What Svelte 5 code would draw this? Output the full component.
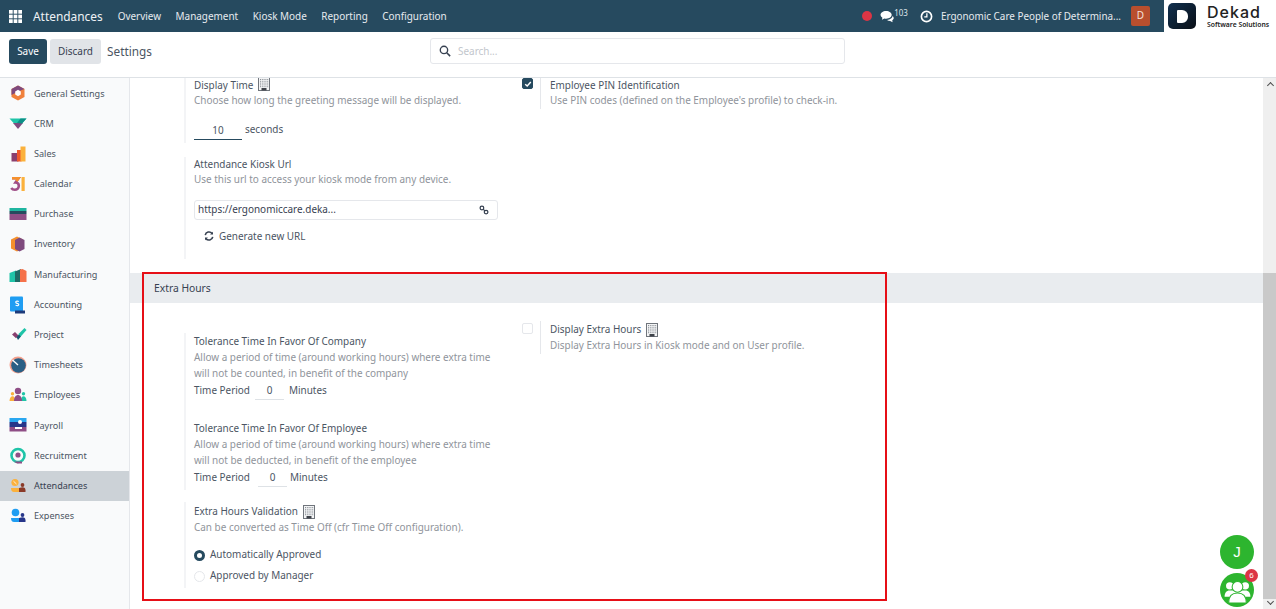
<script>
  const apps = [
    ['General Settings', 'gen'], ['CRM', 'crm'], ['Sales', 'sales'], ['Calendar', 'cal'], ['Purchase', 'pur'],
    ['Inventory', 'inv'], ['Manufacturing', 'man'], ['Accounting', 'acc'], ['Project', 'pro'], ['Timesheets', 'tim'],
    ['Employees', 'emp'], ['Payroll', 'pay'], ['Recruitment', 'rec'], ['Attendances', 'att'], ['Expenses', 'exp']
  ];
  const menu = ['Overview', 'Management', 'Kiosk Mode', 'Reporting', 'Configuration'];
</script>

{#snippet building()}
  <svg class="bld" viewBox="0 0 12 14" width="12" height="14" aria-hidden="true">
    <rect x="0.5" y="0.5" width="11" height="13" fill="#f4f5f6" stroke="#70757c" stroke-width="1"/>
    {#each [2, 3.8, 5.6, 7.4, 9.2] as y}
      {#each [2, 3.8, 5.6, 7.4, 9.2] as x}
        <rect x={x} y={y} width="1" height="1" fill="#8b9097"/>
      {/each}
    {/each}
    <rect x="3.5" y="11" width="5" height="2.500" fill="#3f434a"/>
  </svg>
{/snippet}

{#snippet appIcon(k)}
  <svg viewBox="0 0 18 18" width="18" height="18" aria-hidden="true">
    {#if k === 'gen'}
      <path d="M9 1.500 15.500 5v8L9 16.500 2.500 13V5z" fill="#f0803c"/>
      <path d="M9 1.500 2.500 5v6l6.500-3.500 6.500-2.500z" fill="#7f4a7e"/>
      <path d="M9 5.800 11.800 7.400v3.200L9 12.200 6.200 10.600V7.400z" fill="#fff"/>
    {:else if k === 'crm'}
      <path d="M0.500 3.500h17L13 8.500H5z" fill="#1fc4a8"/>
      <path d="M4 8h10l-5 6z" fill="#7f4a7e"/>
      <path d="M8 8l3.500-4.500h6L13 8.500z" fill="#0d8f87"/>
    {:else if k === 'sales'}
      <rect x="2.500" y="8" width="7" height="8.500" fill="#8a3f6f"/>
      <rect x="8" y="5" width="4.500" height="11.500" fill="#f0592c"/>
      <rect x="11.500" y="1.500" width="5" height="15" fill="#fbb13c"/>
    {:else if k === 'cal'}
      <path d="M3 3.200h6.500L6.500 7.500c2 0 3.300 1.200 3.300 3.300 0 2.400-1.900 4-4 4-1.500 0-2.800-.7-3.600-1.800" fill="none" stroke="#a04f88" stroke-width="2.600"/>
      <path d="M3 3.200h6.500L7.500 6" fill="none" stroke="#f5902d" stroke-width="2.600"/>
      <rect x="12.500" y="2" width="3.200" height="14" fill="#fbb13c"/>
    {:else if k === 'pur'}
      <rect x="0.500" y="3" width="17" height="3" fill="#1fb5a0"/>
      <rect x="0.500" y="6" width="17" height="3" fill="#264a5f"/>
      <rect x="0.500" y="9" width="17" height="6" fill="#8f4e86"/>
    {:else if k === 'inv'}
      <path d="M8 1.500l6 3v9l-6 3-6-3v-9z" fill="#f5902d"/>
      <path d="M10.500 2.500l5 2.500v9l-5 2.500-4.500-2.500V5z" fill="#7f4a7e"/>
    {:else if k === 'man'}
      <path d="M0.500 7 7 4.500V16H0.500z" fill="#1fc4a8"/>
      <path d="M6 5.500 12 3v13H6z" fill="#1d6b65"/>
      <path d="M11 3.500l2.500-.5 4 2v11H11z" fill="#f5714a"/>
    {:else if k === 'acc'}
      <rect x="1" y="0.500" width="13" height="15" rx="1" fill="#1f9df2"/>
      <rect x="6" y="14.500" width="10" height="3" fill="#1d3a7a"/>
      <path d="M9.800 5.500c-2-.9-3.400 0-3 1 .3 1 3 .8 3 2.100 0 1-1.500 1.500-3.200.7" fill="none" stroke="#fff" stroke-width="1.100"/>
    {:else if k === 'pro'}
      <path d="M9.500 8 15.500 2l2 2-7 8z" fill="#1fc4a8"/>
      <path d="M3 8.500 6 6l3.500 3.500-2.500 2.700z" fill="#8a3f6f"/>
      <path d="M7.500 11 10 8.500l1.800 2L9 14z" fill="#14556e"/>
    {:else if k === 'tim'}
      <circle cx="9" cy="9" r="8.500" fill="#f5a08c"/>
      <circle cx="9.500" cy="9.500" r="7.300" fill="#2a5f85"/>
      <path d="M3.500 4 9 9" stroke="#fff" stroke-width="1.300"/>
    {:else if k === 'emp'}
      <circle cx="9" cy="5" r="3.200" fill="#8f4e86"/>
      <circle cx="3.500" cy="7.800" r="1.700" fill="#fbb13c"/>
      <circle cx="14.500" cy="7.800" r="1.700" fill="#1fc4a8"/>
      <path d="M0.500 15c0-3 1.500-4.800 3-4.800S6 11 6 15z" fill="#fbb13c"/>
      <path d="M12 15c0-3 1-4.800 2.500-4.800s3 1.800 3 4.800z" fill="#1fc4a8"/>
      <path d="M5 15c0-4 2-6 4-6s4 2 4 6z" fill="#8f4e86"/>
    {:else if k === 'pay'}
      <rect x="0.500" y="2" width="17" height="4" fill="#2aa7f0"/>
      <rect x="0.500" y="6" width="17" height="5" fill="#27368a"/>
      <rect x="0.500" y="11" width="17" height="4.500" fill="#8f4e86"/>
      <circle cx="11" cy="6" r="2" fill="#fff"/>
      <path d="M6 11h7v2H6z" fill="#fff"/>
    {:else if k === 'rec'}
      <circle cx="9" cy="8.500" r="6.500" fill="none" stroke="#1fc4a8" stroke-width="2.600"/>
      <circle cx="9" cy="8" r="2.600" fill="#8f4e86"/>
      <path d="M5 14.500h8v2H8z" fill="#8f4e86"/>
    {:else if k === 'att'}
      <circle cx="6" cy="5.500" r="3.600" fill="#fbb13c"/>
      <path d="M4.500 4.200 7.500 7" stroke="#fff" stroke-width=".8"/>
      <circle cx="13.500" cy="8" r="1.900" fill="#8a3a28"/>
      <path d="M2 11h9v4H5c-2 0-3-1.500-3-4z" fill="#fbb13c"/>
      <path d="M10 11c0 0 1.500-.8 3.500-.8s3 1 3 3V15H10z" fill="#8a3a28"/>
    {:else}
      <circle cx="6.500" cy="5.500" r="3.800" fill="#1f9df2"/>
      <circle cx="13.500" cy="8" r="1.900" fill="#27368a"/>
      <path d="M2 11h9v4H5c-2 0-3-1.500-3-4z" fill="#1f9df2"/>
      <path d="M10 11c0 0 1.500-.8 3.500-.8s3 1 3 3V15H10z" fill="#27368a"/>
    {/if}
  </svg>
{/snippet}

<div class="page">
  <header class="nav">
    <svg class="grid9" viewBox="0 0 14 14" width="13" height="13" aria-hidden="true">
      {#each [0, 5, 10] as y}
        {#each [0, 5, 10] as x}
          <rect x={x} y={y} width="4" height="4" fill="#fff"/>
        {/each}
      {/each}
    </svg>
    <span class="brand">Attendances</span>
    <nav class="menu">
      {#each menu as m}<span>{m}</span>{/each}
    </nav>
    <div class="systray">
      <span class="dot"></span>
      <svg class="chat" viewBox="0 0 16 14" width="15" height="13" aria-hidden="true">
        <path d="M6.500 1C3 1 .5 2.900.5 5.200c0 1.300.8 2.400 2 3.200L2 10.500l2.700-1.300c.6.100 1.200.2 1.800.2 3.500 0 6-1.900 6-4.200S10 1 6.500 1z" fill="#fff"/>
        <path d="M13.500 6c0 2.600-2.700 4.600-6 4.700.8.700 2 1.100 3.300 1.100l2.700 1.400-.4-2c1-.6 1.600-1.500 1.600-2.500 0-.9-.5-1.600-1.200-2.200z" fill="#fff"/>
      </svg>
      <span class="count">103</span>
      <svg class="clock" viewBox="0 0 14 14" width="13" height="13" aria-hidden="true">
        <circle cx="7" cy="7" r="5.500" fill="none" stroke="#fff" stroke-width="1.800"/>
        <path d="M7.400 3.500v3.900H4.600" fill="none" stroke="#fff" stroke-width="1.400"/>
      </svg>
      <span class="company">Ergonomic Care People of Determina...</span>
      <span class="avatar">D</span>
    </div>
    <div class="logo">
      <span class="logomark"><span class="logod"></span></span>
      <span class="logotext"><b>Dekad</b><small>Software Solutions</small></span>
    </div>
  </header>

  <div class="cp">
    <div class="cpleft">
      <button class="btn primary">Save</button>
      <button class="btn secondary">Discard</button>
      <span class="crumb">Settings</span>
    </div>
    <div class="search">
      <svg viewBox="0 0 14 14" width="12" height="12" aria-hidden="true">
        <circle cx="5.800" cy="5.800" r="4.300" fill="none" stroke="#374151" stroke-width="1.600"/>
        <path d="M9 9l4 4" stroke="#374151" stroke-width="1.800"/>
      </svg>
      <span class="ph">Search...</span>
    </div>
  </div>

  <div class="body">
    <aside class="side">
      {#each apps as a}
        <div class="app" class:active={a[0] === 'Attendances'}>
          <span class="appicon">{@render appIcon(a[1])}</span>
          <span>{a[0]}</span>
        </div>
      {/each}
    </aside>

    <main class="main">
      <div class="cols top">
        <div class="col">
          <div class="setting s1">
            <div class="title clip">Display Time {@render building()}</div>
            <div class="desc first">Choose how long the greeting message will be displayed.</div>
            <div class="secs"><span class="num">10</span><span class="seclabel">seconds</span></div>
          </div>
          <div class="setting s2">
            <div class="title">Attendance Kiosk Url</div>
            <div class="desc">Use this url to access your kiosk mode from any device.</div>
            <div class="url">
              <span>https://ergonomiccare.deka...</span>
              <svg viewBox="0 0 12 12" width="10" height="10" aria-hidden="true">
                <circle cx="3.500" cy="3.500" r="2.200" fill="none" stroke="#374151" stroke-width="1.500"/>
                <circle cx="8.500" cy="8.500" r="2.200" fill="none" stroke="#374151" stroke-width="1.500"/>
                <path d="M5 5l2 2" stroke="#374151" stroke-width="1.500"/>
              </svg>
            </div>
            <div class="gen">
              <svg viewBox="0 0 12 12" width="10" height="10" aria-hidden="true">
                <path d="M1.500 5A4.600 4.600 0 0 1 9.700 3" fill="none" stroke="#374151" stroke-width="1.900"/>
                <path d="M10.800.8v3.500H7.300z" fill="#374151"/>
                <path d="M10.500 7A4.600 4.600 0 0 1 2.300 9" fill="none" stroke="#374151" stroke-width="1.900"/>
                <path d="M1.200 11.200V7.700h3.500z" fill="#374151"/>
              </svg>
              Generate new URL
            </div>
          </div>
        </div>
        <div class="col">
          <div class="check-setting">
            <span class="cb on">
              <svg viewBox="0 0 10 10" width="8" height="8" aria-hidden="true"><path d="M1.500 5.200 4 7.500 8.500 2.500" fill="none" stroke="#fff" stroke-width="1.800"/></svg>
            </span>
            <div class="rule">
              <div class="title">Employee PIN Identification</div>
              <div class="desc first">Use PIN codes (defined on the Employee's profile) to check-in.</div>
            </div>
          </div>
        </div>
      </div>

      <div class="section">Extra Hours</div>

      <div class="cols extra">
        <div class="col leftcol">
          <div class="setting s3">
            <div class="title">Tolerance Time In Favor Of Company</div>
            <div class="desc">Allow a period of time (around working hours) where extra time<br/>will not be counted, in benefit of the company</div>
            <div class="period"><span>Time Period</span><span class="num sm">0</span><span>Minutes</span></div>
            <div class="title t2">Tolerance Time In Favor Of Employee</div>
            <div class="desc">Allow a period of time (around working hours) where extra time<br/>will not be deducted, in benefit of the employee</div>
            <div class="period last"><span>Time Period</span><span class="num sm second">0</span><span>Minutes</span></div>
          </div>
          <div class="setting s4">
            <div class="title">Extra Hours Validation {@render building()}</div>
            <div class="desc">Can be converted as Time Off (cfr Time Off configuration).</div>
            <div class="radios">
              <div class="radio"><span class="rd on"></span>Automatically Approved</div>
              <div class="radio"><span class="rd"></span>Approved by Manager</div>
            </div>
          </div>
        </div>
        <div class="col">
          <div class="check-setting lower">
            <span class="cb"></span>
            <div class="rule">
              <div class="title">Display Extra Hours {@render building()}</div>
              <div class="desc">Display Extra Hours in Kiosk mode and on User profile.</div>
            </div>
          </div>
        </div>
      </div>
    </main>

    <div class="scrollbar">
      <span class="arrow up"></span>
      <span class="thumb"></span>
      <span class="arrow down"></span>
    </div>
  </div>

  <div class="redbox"></div>
  <div class="fab j">J</div>
  <div class="fab team">
    <svg viewBox="0 0 30 30" width="31" height="31" aria-hidden="true">
      <circle cx="7.500" cy="10.500" r="3.600" fill="#fff"/>
      <circle cx="22.500" cy="10.500" r="3.600" fill="#fff"/>
      <path d="M2.500 21c0-3.500 1.500-6 5-6h15c3.500 0 5 2.500 5 6z" fill="#fff"/>
      <circle cx="15" cy="11.500" r="5.200" fill="#fff" stroke="#2db52f" stroke-width="1"/>
      <path d="M6.500 27c0-6 2.500-9.500 8.500-9.500s8.500 3.500 8.500 9.500z" fill="#fff" stroke="#2db52f" stroke-width="1"/>
    </svg>
    <span class="badge">6</span>
  </div>
</div>

<style>
  :global(body) { margin: 0; background: #fff; }
  .page {
    position: relative; width: 1276px; height: 609px; overflow: hidden;
    display: flex; flex-direction: column;
    font-family: "Noto Sans", "Open Sans", sans-serif; font-size: 9.95px; line-height: 15.75px; color: #4b5563;
  }
  .nav {
    height: 32px; flex: none; background: #264a5f; color: #fff;
    display: flex; align-items: center; padding-left: 9px; box-sizing: border-box;
  }
  .grid9 { margin-right: 11px; }
  .brand { font-size: 11.9px; margin-right: 15px; color: #eef2f5; padding-top: 1px; }
  .menu { display: flex; gap: 14.5px; color: #e6ebef; font-size: 9.95px; padding-top: 1px; }
  .systray { margin-left: auto; display: flex; align-items: center; color: #e6ebef; }
  .dot { width: 10px; height: 10px; border-radius: 50%; background: #dc3545; margin-right: 8px; }
  .chat { margin-right: 0; }
  .count { font-size: 8px; line-height: 1; margin: -7px 12px 0 -1px; color: #dfe5ea; }
  .clock { margin-right: 8px; }
  .company { margin-right: 10px; font-size: 9.9px; padding-top: 1px; }
  .avatar {
    width: 19px; height: 20px; border-radius: 2px; background: #b94f2e; color: #f5e3dc;
    display: flex; align-items: center; justify-content: center; margin-right: 14px;
  }
  .logo {
    width: 112px; height: 32px; background: #fff; display: flex; align-items: center;
    box-sizing: border-box; padding-left: 4px; gap: 11px; flex: none;
  }
  .logomark {
    width: 28px; height: 26px; border-radius: 5px; background: linear-gradient(135deg, #10304f, #0a0f16);
    display: flex; align-items: center; justify-content: center; flex: none;
  }
  .logod { width: 11px; height: 13px; box-sizing: border-box; border-radius: 1px 6px 6px 1px; background: #fff; }
  .logotext { display: flex; flex-direction: column; color: #222; }
  .logotext b { font-family: "Inter", sans-serif; font-weight: 500; font-size: 16px; line-height: 17px; letter-spacing: 1px; }
  .logotext small { font-size: 6.8px; line-height: 8px; font-weight: 600; white-space: nowrap; }

  .cp {
    height: 46px; flex: none; box-sizing: border-box; position: relative; background: #fff;
    border-bottom: 1px solid #dee2e6; display: flex; align-items: flex-start; padding: 7px 0 0 9px;
  }
  .cpleft { display: flex; align-items: center; gap: 3px; }
  .btn { height: 25px; border: 0; border-radius: 3px; font: inherit; padding: 1px 0 0; display: block; }
  .primary { background: #264a5f; color: #fff; width: 38px; }
  .secondary { background: #e1e4e8; color: #374151; width: 51px; }
  .crumb { font-size: 11.8px; margin-left: 3px; color: #4b5563; }
  .search {
    position: absolute; left: 430px; top: 6px; width: 415px; height: 26px; box-sizing: border-box;
    border: 1px solid #e5e7eb; border-radius: 3px; display: flex; align-items: center; gap: 7px; padding-left: 8px;
    color: #c2c6cc;
  }
  .ph { padding-top: 2px; }

  .body { flex: 1; display: flex; min-height: 0; }
  .side { width: 130px; flex: none; box-sizing: border-box; background: #f9fafb; border-right: 1px solid #e5e7eb; padding-top: 0.3px; }
  .app { height: 30.2px; display: flex; align-items: center; gap: 7px; padding-left: 9px; color: #4b5563; font-size: 9.1px; white-space: nowrap; }
  .appicon { width: 18px; height: 18px; display: block; flex: none; }
  .appicon svg { display: block; }
  .app.active { background: #ccd2d7; color: #374151; }

  .main { flex: 1; min-width: 0; overflow: hidden; background: #fff; }
  .cols { display: grid; grid-template-columns: 338px 1fr; padding-left: 54px; }
  .top { height: 195px; }
  .col { min-width: 0; }
  .setting { border-left: 2px solid #f3f4f6; padding-left: 8px; box-sizing: border-box; }
  .title { color: #4b5563; display: flex; align-items: center; gap: 5px; height: 15.75px; }
  .desc { color: #8f949b; }
  .desc.first { margin-top: -0.75px; }
  .s1 { height: 65px; }
  .clip .bld { margin-top: -3px; }
  .secs { display: flex; gap: 3px; align-items: center; margin-top: 8.75px; height: 24px; color: #4b5563; }
  .secs .num { width: 48px; text-align: center; border-bottom: 1px solid #264a5f; line-height: 18px; padding-top: 1px; }
  .seclabel { padding-top: 1px; }
  .s2 { margin-top: 13.5px; height: 102px; }
  .url {
    margin-top: 11.5px; width: 304px; height: 20px; box-sizing: border-box; border: 1px solid #e5e7eb; border-radius: 3px;
    display: flex; align-items: center; justify-content: space-between; padding: 0 8px 0 3px; color: #374151;
  }
  .gen { margin: 9px 0 0 10px; display: flex; align-items: center; gap: 5px; color: #4b5563; }

  .check-setting { display: flex; }
  .check-setting.lower { margin-top: -2px; }
  .lower .cb { margin-top: 2px; }
  .lower .rule { padding-top: 1px; }
  .cb {
    width: 11px; height: 11px; border-radius: 2px; box-sizing: border-box; border: 1px solid #e5e7eb; background: #fff;
    display: flex; align-items: center; justify-content: center; flex: none; margin-right: 7px;
  }
  .cb.on { background: #264a5f; border-color: #264a5f; }
  .rule { border-left: 1px solid #e5e7eb; padding-left: 9px; }

  .section {
    height: 30px; box-sizing: border-box; padding: 2px 0 0 24px; background: #e9ecef; color: #374151;
    display: flex; align-items: center; font-size: 10.3px;
  }
  .extra { padding-top: 20px; }
  .leftcol { padding-top: 10px; }
  .s3 { height: 157px; padding-top: 1px; }
  .period { display: flex; align-items: center; height: 18px; margin-top: 1px; color: #4b5563; }
  .period.last { margin-top: 0; }
  .num.sm { width: 29px; text-align: center; border-bottom: 1px solid #dee2e6; margin: 0 5px; line-height: 17px; }
  .num.second { margin-left: 8px; margin-right: 3px; }
  .t2 { margin-top: 21px; }
  .s4 { margin-top: 12px; height: 86px; padding-top: 2px; }
  .radios { margin-top: 9px; }
  .radio { display: flex; align-items: center; gap: 5px; height: 21px; color: #4b5563; }
  .rd { width: 11px; height: 11px; border-radius: 50%; box-sizing: border-box; border: 1px solid #e5e7eb; background: #fff; }
  .rd.on { border: 3px solid #264a5f; }

  .scrollbar { position: relative; width: 13px; flex: none; background: #efefef; }
  .thumb { position: absolute; left: 0; right: 0; top: 195px; bottom: 10px; background: #c9c9c9; }
  .arrow { position: absolute; left: 0; right: 0; height: 10px; display: block; }
  .arrow.up { top: 0; }
  .arrow.down { bottom: 0; }
  .arrow.down::after {
    content: ""; position: absolute; left: 5px; top: 0; width: 4px; height: 4px;
    border-right: 1.500px solid #505050; border-bottom: 1.500px solid #505050; transform: rotate(45deg);
  }
  .arrow.up::after {
    content: ""; position: absolute; left: 5px; top: 5px; width: 4px; height: 4px;
    border-left: 1.500px solid #505050; border-top: 1.500px solid #505050; transform: rotate(45deg);
  }

  .redbox {
    position: absolute; left: 142px; top: 272px; width: 745px; height: 329px; box-sizing: border-box;
    border: 2px solid #e60f17; pointer-events: none;
  }
  .fab { position: absolute; border-radius: 50%; background: #2db52f; color: #fff; }
  .j {
    left: 1220px; top: 535px; width: 34px; height: 34px; display: flex; align-items: center; justify-content: center;
    font-family: "Liberation Sans", sans-serif; font-size: 15px;
  }
  .team {
    left: 1220px; top: 573px; width: 34px; height: 34px; display: flex; align-items: center; justify-content: center;
  }
  .badge {
    position: absolute; left: 25px; top: -4px; width: 13px; height: 13px; border-radius: 50%; background: #dc3545;
    font-family: "Liberation Sans", sans-serif; font-size: 8px; line-height: 13px; text-align: center;
  }
</style>
